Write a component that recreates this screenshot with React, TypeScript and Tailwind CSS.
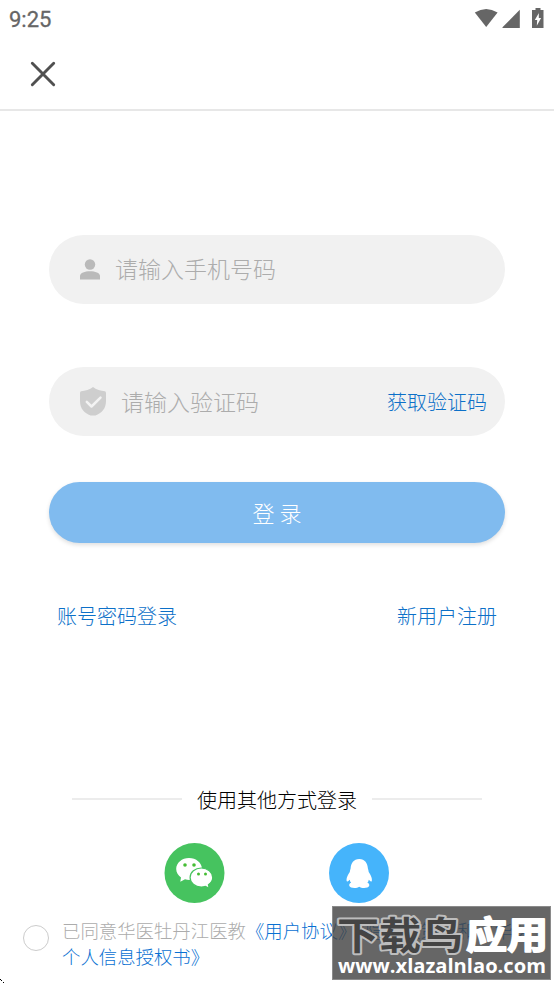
function StatusBar() {
  return (
    <div className="flex h-[38px] items-center justify-between pl-[9px] pr-[10px] text-[#666666]">
      <span className="pt-px font-['Roboto',sans-serif] text-[22px] leading-[38px] font-normal [-webkit-text-stroke:0.3px_#666666]">9:25</span>
      <svg className="block h-[38px] w-[70px]" viewBox="0 0 70 38" fill="currentColor">
        <path d="M0.8 12.5Q12.2 5.3 23.6 12.5L12.2 27Z" />
        <path d="M28.5 28V27.2L45.8 9.8V28Z" />
        <path fillRule="evenodd" d="M58.7 10H61.5V8H66.5V10H69.5V28H58V10ZM65 12.7 60.8 20H63.2L62.8 25.7 67.1 18H64.8V12.7Z" />
      </svg>
    </div>
  );
}

function Watermark() {
  return (
    <div className="absolute left-[332px] top-[906px] h-[74px] w-[219px] border border-[#8a8a8a] bg-[#404040]/80">
      <svg className="-mt-px -ml-px block" width="219" height="74" viewBox="0 0 219 74">
        <g fontFamily="'Noto Sans CJK SC', sans-serif" fontWeight="700" strokeLinejoin="round" paintOrder="stroke">
          <text x="5" y="43" fontSize="38" textLength="126" lengthAdjust="spacingAndGlyphs" fill="#444444" stroke="#bdbdbd" strokeWidth="4">下载鸟</text>
          <text x="134" y="43" fontSize="37" textLength="82" lengthAdjust="spacingAndGlyphs" fill="#ffffff" stroke="#ffffff" strokeWidth="1.8">应用</text>
        </g>
        <text x="6" y="67" textLength="208" lengthAdjust="spacingAndGlyphs" fontFamily="'Open Sans', sans-serif" fontWeight="700" fontSize="19" fill="#ffffff">www.xlazalnlao.com</text>
      </svg>
    </div>
  );
}

export default function App() {
  return (
    <div className="relative flex h-[984px] w-[554px] flex-col overflow-hidden bg-white font-['Noto_Sans_CJK_SC',sans-serif] font-light">
      <StatusBar />
      <header className="flex h-[73px] items-center border-b-2 border-[#e7e7e7] pl-[30px]">
        <button aria-label="关闭">
          <svg className="block" width="26" height="26" viewBox="0 0 26 26" fill="none" stroke="#505050" strokeWidth="2.9" strokeLinecap="round">
            <path d="M2.3 2.3 23.7 23.7M23.7 2.3 2.3 23.7" />
          </svg>
        </button>
      </header>

      <main className="mx-[49px] flex w-[456px] flex-col pt-[124px]">
        <label className="flex h-[69px] items-center rounded-full bg-[#f1f1f1] pl-[31px]">
          <svg width="20" height="21" viewBox="0 0 20 21" fill="#bababa">
            <circle cx="10" cy="5.5" r="5.2" />
            <path d="M0 20.5V17C0 13.8 4.8 12.2 10 12.2S20 13.8 20 17V20.5Z" />
          </svg>
          <span className="mb-[3px] ml-[15px] text-[23px] leading-[34px] text-[#acacac]">请输入手机号码</span>
        </label>

        <label className="mt-[63px] flex h-[69px] items-center rounded-full bg-[#f1f1f1] pl-[31px] pr-[18px]">
          <svg width="26" height="29" viewBox="0 0 26 29">
            <path d="M13 0C10 2.5 5 4 1.2 4.3Q0 4.5 0 6V14C0 22 4.5 26 10.5 28.6H15.5C21.5 26 26 22 26 14V6Q26 4.5 24.8 4.3C21 4 16 2.5 13 0Z" fill="#cecece" />
            <path d="m6.8 14.8 4.7 4.7 9-8.8" fill="none" stroke="#f3f3f3" strokeWidth="2.5" strokeLinecap="round" strokeLinejoin="round" />
          </svg>
          <span className="mb-[2px] ml-[15px] text-[23px] leading-[34px] text-[#acacac]">请输入验证码</span>
          <button className="ml-auto text-[20px] leading-[30px] text-[#0c70c8]">获取验证码</button>
        </label>

        <button className="mt-[46px] flex h-[61px] items-center justify-center rounded-full bg-[#80bbef] text-[22px] text-white shadow-[0_2px_4px_rgba(0,0,0,0.13)]">
          登 录
        </button>

        <div className="mt-[58px] flex justify-between px-2 text-[20px] leading-[30px] text-[#0c70c8]">
          <a>账号密码登录</a>
          <a>新用户注册</a>
        </div>
      </main>

      <section className="mt-[153px]">
        <div className="flex h-[30px] items-center pl-[72px] text-[20px] text-black">
          <span className="h-[2px] w-[110px] bg-[#ececec]" />
          <span className="mx-[15px] pt-px leading-[30px]">使用其他方式登录</span>
          <span className="h-[2px] w-[110px] bg-[#ececec]" />
        </div>
        <div className="mt-[29px] flex gap-[104px] pl-[164px]">
          <svg width="61" height="60" viewBox="0 0 61 60">
            <circle cx="30.5" cy="30" r="30" fill="#46c35f" />
            <path d="M25 15C18 15 12.2 19.8 12.2 26C12.2 29.6 14.2 32.5 17 34.4L16.3 38.8 21 36.2C22.4 36.7 23.9 36.9 25.3 36.9C32.2 36.9 38 32 38 26C38 19.8 32 15 25 15Z" fill="white" />
            <path d="M37.3 25C31 25 26.1 29.2 26.1 34.5S31 44 37.3 44C38.7 44 40.1 43.8 41.4 43.3L45.2 45.3 44.4 41.7C47 40 48.7 37.4 48.7 34.5C48.7 29.2 43.6 25 37.3 25Z" fill="white" stroke="#46c35f" strokeWidth="1.2" />
            <g fill="#46bd35"><circle cx="21" cy="22" r="1.8"/><circle cx="30" cy="22" r="1.8"/><circle cx="34.5" cy="31" r="1.5"/><circle cx="41.5" cy="31" r="1.5"/></g>
          </svg>
          <svg width="60" height="60" viewBox="0 0 60 60">
            <circle cx="30" cy="30" r="30" fill="#45b4fb" />
            <path d="M30.3 16C24.5 16 22 20.3 21.6 25.5C21.2 26.8 20.9 27.8 20.8 29C18.5 32 17 36 17.7 38C18.3 39.2 19.6 38 20.7 36.8C20.9 38 21.4 39 22.1 39.7C20.4 40.2 20 41.6 20.3 42.8C21 45.6 28 45.6 30.2 43.8C32.5 45.6 39.5 45.6 40.2 42.8C40.5 41.6 40.1 40.2 38.4 39.7C39.1 39 39.6 38 39.8 36.8C40.9 38 42.2 39.2 42.8 38C43.5 36 42 32 39.7 29C39.6 27.8 39.3 26.8 38.9 25.5C38.5 20.3 36 16 30.3 16Z" fill="white" />
          </svg>
        </div>
      </section>

      <div className="mt-[14px] flex items-start pl-[23px]">
        <span className="mt-[8px] size-[26px] shrink-0 rounded-full border border-[#cccccc]" />
        <p className="ml-[13px] w-[486px] text-[18.4px] leading-[26px] whitespace-nowrap text-[#acacac]">
          已同意华医牡丹江医教<span className="text-[#0870d2]">《用户协议》《隐私政策》和《华医<br />个人信息授权书》</span>
        </p>
      </div>
      <Watermark />
      <svg className="absolute bottom-0 left-0" width="5" height="5" viewBox="0 0 5 5"><path d="M0 0H1V1H0ZM1 1H2V2H1ZM3 3H4V4H3Z" fill="black" /></svg>
    </div>
  );
}
